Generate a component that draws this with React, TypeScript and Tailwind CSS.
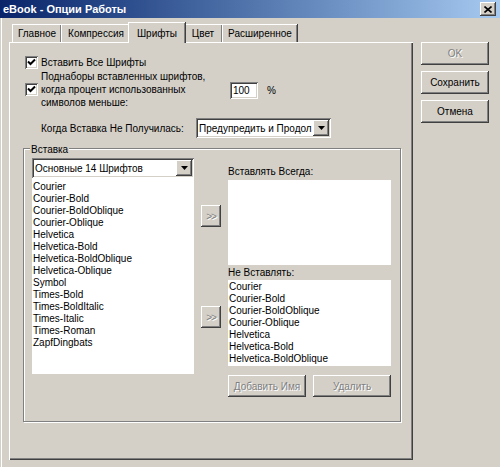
import type { ReactNode } from 'react'

// Classic 3D bevels
const raised =
  'shadow-[inset_-1px_-1px_#404040,inset_1px_1px_#ffffff,inset_-2px_-2px_#808080,inset_2px_2px_#d4d0c8]'
const sunken =
  'shadow-[inset_1px_1px_#808080,inset_-1px_-1px_#ffffff,inset_2px_2px_#404040,inset_-2px_-2px_#d4d0c8]'
const grayed = 'text-[#808080] [text-shadow:1px_1px_0_#ffffff]'

const baseFonts = [
  'Courier',
  'Courier-Bold',
  'Courier-BoldOblique',
  'Courier-Oblique',
  'Helvetica',
  'Helvetica-Bold',
  'Helvetica-BoldOblique',
  'Helvetica-Oblique',
  'Symbol',
  'Times-Bold',
  'Times-BoldItalic',
  'Times-Italic',
  'Times-Roman',
  'ZapfDingbats',
]

const neverEmbed = baseFonts.slice(0, 7)

function Button({ label, disabled, className = '' }: { label: ReactNode; disabled?: boolean; className?: string }) {
  return (
    <div className={`${raised} flex items-center justify-center bg-[#d4d0c8] ${disabled ? grayed : 'text-black'} ${className}`}>
      {label}
    </div>
  )
}

function Checkbox() {
  return (
    <div className={`${sunken} w-[13px] h-[13px] bg-white shrink-0 flex items-center justify-center`}>
      <svg width="13" height="13" viewBox="0 0 13 13">
        <path d="M3 5.5 L5.5 8 L10 3.5" stroke="#000" strokeWidth="2" fill="none" />
      </svg>
    </div>
  )
}

function Combo({ value, className = '' }: { value: string; className?: string }) {
  return (
    <div className={`${sunken} bg-white flex items-center pl-[3px] pr-[2px] ${className}`}>
      <span className="flex-1 whitespace-nowrap">{value}</span>
      <div className={`${raised} w-[16px] h-[16px] shrink-0 flex items-center justify-center bg-[#d4d0c8]`}>
        <svg width="7" height="4" viewBox="0 0 7 4">
          <path d="M0 0 H7 L3.5 4 Z" fill="#000" />
        </svg>
      </div>
    </div>
  )
}

function ListBox({ items, className = '' }: { items: string[]; className?: string }) {
  return (
    <div className={`bg-white pl-[1px] leading-[12px] ${className}`}>
      {items.map(name => (
        <div key={name} className="whitespace-nowrap">{name}</div>
      ))}
    </div>
  )
}

function Tab({ label, width, active }: { label: string; width: number; active?: boolean }) {
  if (active) {
    return (
      <div
        className="relative z-10 -mx-[2px] -mb-[1px] h-[21px] flex items-start justify-center pt-[3px] bg-[#d4d0c8] border-l border-t border-white shadow-[inset_-1px_0_#808080,1px_0_#404040]"
        style={{ width: width + 4 }}
      >
        {label}
      </div>
    )
  }
  return (
    <div
      className="h-[18px] flex items-center justify-center bg-[#d4d0c8] border-l border-t border-white shadow-[inset_-1px_0_#808080,1px_0_#404040]"
      style={{ width }}
    >
      {label}
    </div>
  )
}

export default function App() {
  return (
    <div className="w-[500px] h-[467px] bg-[#d4d0c8] text-[10px] text-black font-['Liberation_Sans',Arial,sans-serif] overflow-hidden shadow-[inset_1px_0_#d4d0c8,inset_2px_0_#ffffff]">
      {/* Title bar */}
      <div className="h-[18px] flex items-center justify-between pl-[3px] pr-[4px] bg-gradient-to-r from-[#0a246a] to-[#a6caf0]">
        <span className="text-white font-bold text-[11px]">eBook - Опции Работы</span>
        <div className={`${raised} w-[16px] h-[14px] bg-[#d4d0c8] flex items-center justify-center`}>
          <svg width="8" height="7" viewBox="0 0 8 7">
            <path d="M0.5 0.5 L7.5 6.5 M7.5 0.5 L0.5 6.5" stroke="#000" strokeWidth="1.6" />
          </svg>
        </div>
      </div>

      <div className="flex pt-[4px]">
        <div className="ml-[9px] w-[404px] flex flex-col">
          {/* Tabs */}
          <div className="h-[20px] flex items-end pl-[3px]">
            <Tab label="Главное" width={49} />
            <Tab label="Компрессия" width={69} />
            <Tab label="Шрифты" width={53} active />
            <Tab label="Цвет" width={39} />
            <Tab label="Расширенное" width={75} />
          </div>

          {/* Tab page */}
          <div className="h-[418px] shadow-[inset_1px_1px_#ffffff,inset_-1px_-1px_#404040,inset_-2px_-2px_#808080] pl-[16px] pt-[14px]">
            <div className="flex items-center gap-[3px] h-[13px]">
              <Checkbox />
              <span>Вставить Все Шрифты</span>
            </div>

            <div className="flex items-center gap-[3px] mt-[1px]">
              <Checkbox />
              <div className="w-[186px] leading-[13px]">
                <div>Поднаборы вставленных шрифтов,</div>
                <div>когда процент использованных</div>
                <div>символов меньше:</div>
              </div>
              <div className={`${sunken} bg-white w-[28px] h-[17px] flex items-center pl-[3px] mt-[2px]`}>100</div>
              <span className="ml-[6px] mt-[2px]">%</span>
            </div>

            <div className="flex items-center mt-[9px] pl-[16px]">
              <span className="w-[155px]">Когда Вставка Не Получилась:</span>
              <Combo value="Предупредить и Продол" className="w-[135px] h-[20px]" />
            </div>

            {/* Embedding group */}
            <div className="relative mt-[10px] -ml-[2px] w-[378px] h-[274px] border border-[#808080] shadow-[inset_1px_1px_#ffffff,1px_1px_#ffffff] pl-[8px] pt-[9px] flex">
              <span className="absolute left-[6px] -top-[7px] px-[1px] bg-[#d4d0c8]">Вставка</span>

              <div className="w-[162px] flex flex-col">
                <Combo value="Основные 14 Шрифтов" className="h-[20px]" />
                <ListBox items={baseFonts} className="h-[196px] pt-[3px]" />
              </div>

              <div className="ml-[7px] w-[20px] flex flex-col">
                <Button label="&gt;&gt;" disabled className="mt-[47px] h-[22px] tracking-[-1px]" />
                <Button label="&gt;&gt;" disabled className="mt-[79px] h-[22px] tracking-[-1px]" />
              </div>

              <div className="ml-[7px] w-[163px] flex flex-col">
                <div className="mt-[7px] h-[14px] leading-[14px]">Вставлять Всегда:</div>
                <div className="mt-[1px] h-[85px] bg-white" />
                <div className="h-[15px] leading-[15px]">Не Вставлять:</div>
                <ListBox items={neverEmbed} className="h-[86px] pt-[1px]" />
                <div className="mt-[9px] flex gap-[7px]">
                  <Button label="Добавить Имя" disabled className="w-[78px] h-[22px]" />
                  <Button label="Удалить" disabled className="w-[78px] h-[22px]" />
                </div>
              </div>
            </div>
          </div>
        </div>

        {/* Dialog buttons */}
        <div className="ml-[8px] mt-[20px] flex flex-col gap-[6px]">
          <Button label="OK" disabled className="w-[68px] h-[23px]" />
          <Button label="Сохранить" className="w-[68px] h-[23px]" />
          <Button label="Отмена" className="w-[68px] h-[23px]" />
        </div>
      </div>
    </div>
  )
}
